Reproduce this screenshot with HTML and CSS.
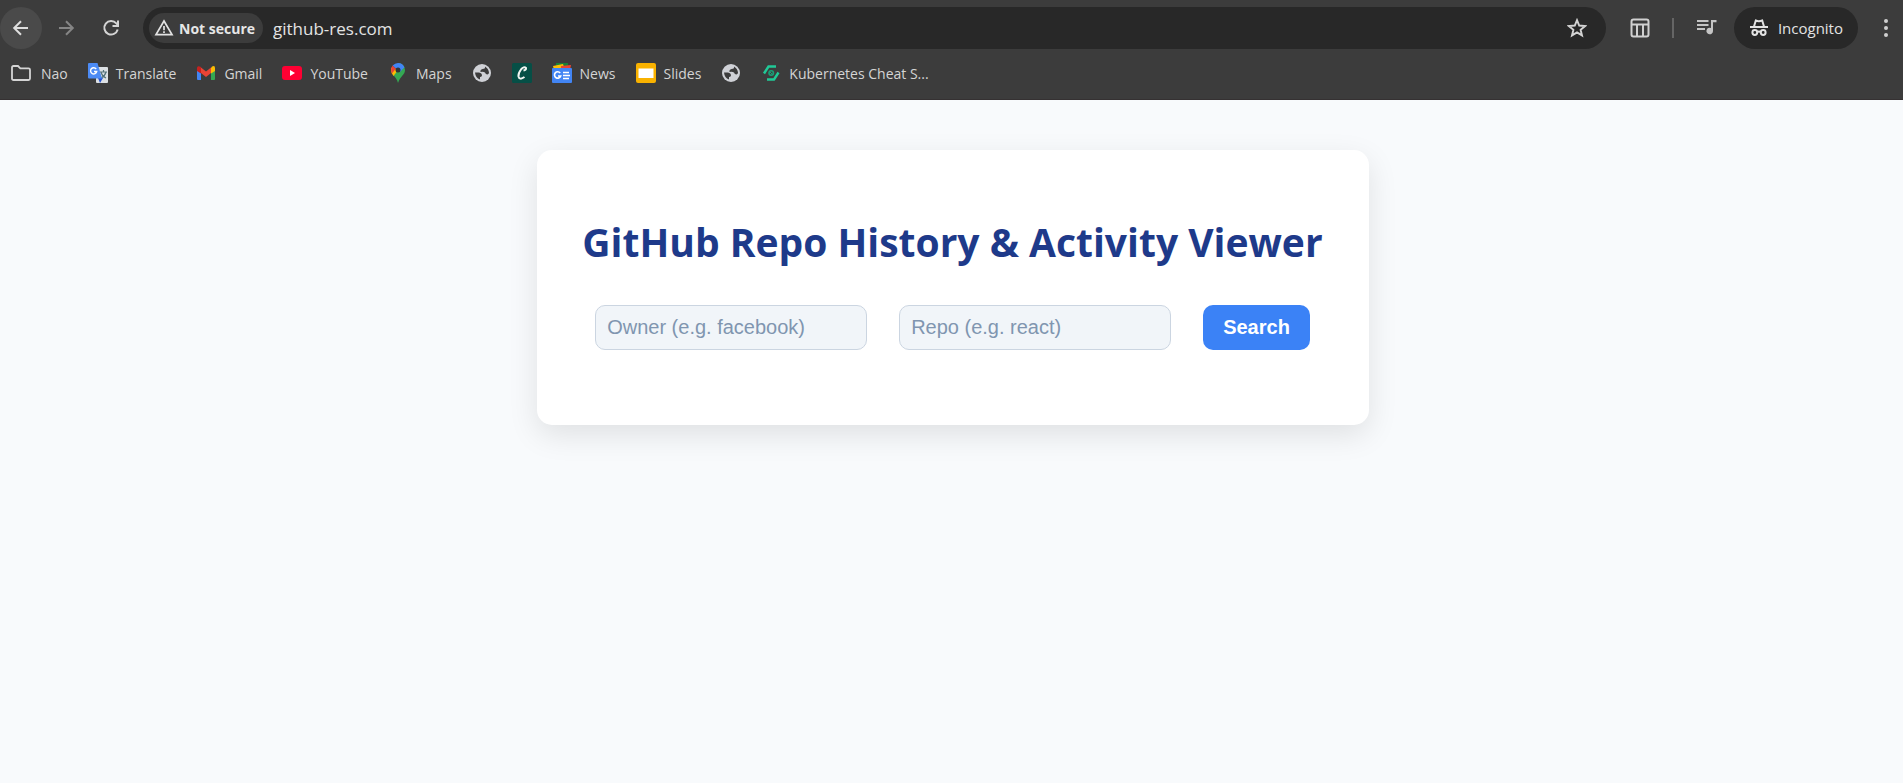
FILE: index.html
```html
<!DOCTYPE html>
<html lang="en">
<head>
<meta charset="utf-8">
<title>GitHub Repo History &amp; Activity Viewer</title>
<link rel="stylesheet" href="styles.css">
</head>
<body>
<header class="browser">
  <nav class="toolbar" aria-label="Browser toolbar">
    <button class="tool tool-active" aria-label="Back"><svg width="20" height="20" viewBox="0 0 20 20" fill="none" stroke="#dedede" stroke-width="2"><path d="M17 10H4M10 3.200L3.200 10l6.800 6.800"/></svg></button>
    <button class="tool" aria-label="Forward"><svg width="20" height="20" viewBox="0 0 20 20" fill="none" stroke="#858585" stroke-width="2"><path d="M3 10h13M10 3.200l6.800 6.800-6.800 6.800"/></svg></button>
    <button class="tool" aria-label="Reload"><svg width="20" height="20" viewBox="0 0 20 20" fill="none" stroke="#d4d4d4" stroke-width="2"><path d="M16.700 11.500A6.800 6.800 0 1 1 15.300 5.300L17 7.200M17 2.500v5.500h-5.500"/></svg></button>
    <div class="omnibox">
      <button class="chip"><svg width="20" height="20" viewBox="0 0 20 20" fill="none" stroke="#e3e3e3" stroke-width="1.700"><path d="M10 3L18 16.600H2zM10 8v4.300M10 13.300v1.700"/></svg>Not secure</button>
      <input class="url" type="text" value="github-res.com" aria-label="Address">
      <button class="star" aria-label="Bookmark this page"><svg width="20" height="20" viewBox="0 0 20 20" fill="none" stroke="#d4d4d4" stroke-width="1.900"><path d="M10 2.200l2.200 5.300 5.900.5-4.500 3.800 1.400 5.600L10 14.400l-5 3 1.400-5.600L1.900 8l5.900-.5z"/></svg></button>
    </div>
    <div class="actions">
      <button class="action" aria-label="Layout"><svg width="20" height="20" viewBox="0 0 20 20" fill="none" stroke="#d0d0d0" stroke-width="2"><rect x="1.500" y="1.500" width="17" height="17" rx="2"/><path d="M2 6.500h16M7 6.500V18M13 6.500V18"/></svg></button>
      <span class="divider"></span>
      <button class="action" aria-label="Media controls"><svg width="20" height="20" viewBox="0 0 20 20" fill="#c4c4c4"><path d="M0 2h11.500v2H0zM0 6h11.500v2H0zM0 10h8v2H0zM14 2h5.500v2.200H16V13a3.300 3.300 0 1 1-2-3z"/></svg></button>
    </div>
    <button class="incognito"><svg width="20" height="20" viewBox="0 0 20 20" fill="none" stroke="#e3e3e3" stroke-width="2"><path d="M1 9h18M5 8.500L6.800 2.500q2 .8 3.200.7T13.200 2.500L15 8.500"/><circle cx="5.800" cy="14.500" r="2.400"/><circle cx="14.200" cy="14.500" r="2.400"/><path d="M8 14q2-1 4 0"/></svg>Incognito</button>
    <button class="menu" aria-label="Menu"><svg width="6" height="20" viewBox="0 0 6 20" fill="#d0d0d0"><circle cx="3" cy="3" r="2"/><circle cx="3" cy="10" r="2"/><circle cx="3" cy="17" r="2"/></svg></button>
  </nav>
  <nav class="bookmarks" aria-label="Bookmarks">
    <a class="folder" href="#"><svg width="20" height="20" viewBox="0 0 20 20" fill="none" stroke="#d4d4d4" stroke-width="1.800"><path d="M1 4.500q0-1.500 1.500-1.500H7l2.300 2.300h8.200q1.500 0 1.500 1.500v8.700q0 1.500-1.500 1.500h-15Q1 17 1 15.500z"/></svg>Nao</a>
    <a href="#"><svg width="20" height="20" viewBox="0 0 20 20"><rect x="8" y="4" width="12" height="16" rx="1" fill="#dce0e4"/><path d="M12 9h7M15.500 7v2M13 9q1 4 5 6M18 9q-1 4-5 6" fill="none" stroke="#55737b" stroke-width="1.200"/><path d="M10 15h5l-3 5z" fill="#2452cf"/><path d="M1 0h8.500L14 15.500H1q-1 0-1-1V1q0-1 1-1z" fill="#4c8bf5"/><path d="M8.200 6A3.100 3.100 0 1 0 8.700 8.500H6" fill="none" stroke="#fff" stroke-width="1.400"/></svg>Translate</a>
    <a href="#"><svg width="20" height="20" viewBox="0 0 20 20"><path d="M1 7l4 3v7H2q-1 0-1-1z" fill="#4285f4"/><path d="M19 7l-4 3v7h3q1 0 1-1z" fill="#34a853"/><path d="M15 5v5.500L19 8V5q0-3-3-1.500z" fill="#fbbc04"/><path d="M1 5v3l4 2.500V4Q1 2 1 5z" fill="#c5221f"/><path d="M5 4.500l5 4 5-4V10l-5 4-5-4z" fill="#ea4335"/></svg>Gmail</a>
    <a href="#"><svg width="20" height="20" viewBox="0 0 20 20"><rect y="3" width="20" height="14" rx="3" fill="#ff0033"/><path d="M8 7l5 3-5 3z" fill="#fff"/></svg>YouTube</a>
    <a href="#"><svg width="20" height="20" viewBox="0 0 20 20"><path d="M10 0a7 7 0 0 1 7 7c0 5-5 6-7 13-1-4-3-6-5-8l8-10z" fill="#34a853"/><path d="M3.500 4.500L10 7l-4.500 6Q3 10 3 7q0-1.500.5-2.500z" fill="#fbbc04"/><path d="M4.600 2.500L8 5.500 4 10.500Q2 6 4.600 2.500z" fill="#ea4335"/><path d="M4.600 2.500Q7 0 10 0q4.500 0 6.500 4.300L12 9 8 5.500z" fill="#4285f4"/><circle cx="10" cy="7" r="2.500" fill="#303437"/></svg>Maps</a>
    <a href="#" aria-label="Website"><svg width="20" height="20" viewBox="0 0 20 20"><circle cx="10" cy="10" r="9" fill="#cfd1d6"/><path d="M13 3.500Q13.500 6 10.500 6 8 6.500 8.500 9q3-.5 4.500.5.500 2 2.500 2 1.500-.5 1.500-2-.5-4-4-6zM3 9.500h4q3 .5 3 3-.5 1.500-2 1.500v2.500Q3.500 15 3 9.500z" fill="#3c3c3c"/></svg></a>
    <a href="#" aria-label="C"><svg width="20" height="20" viewBox="0 0 20 20"><rect width="20" height="20" rx="1.500" fill="#064f46"/><path d="M11.500 7.500q3-.5 2.500-2.500-2-2-5 1.500-3 4-2.500 7 1 4 6 .5" fill="none" stroke="#f1f5f2" stroke-width="2"/></svg></a>
    <a href="#"><svg width="20" height="20" viewBox="0 0 20 20"><path d="M4 0h12v6H4z" fill="#188038"/><path d="M1 3l10-2 2 6H2z" fill="#fbbc04"/><path d="M9 3l10-1-1 5H9z" fill="#ea4335"/><rect y="5" width="20" height="15" rx="1" fill="#4285f4"/><path d="M8.200 10A3.200 3.200 0 1 0 8.700 13H6M11 9.500h6M11 12.500h7M11 15.500h6" fill="none" stroke="#fff" stroke-width="1.600"/></svg>News</a>
    <a href="#"><svg width="20" height="20" viewBox="0 0 20 20"><rect width="20" height="20" rx="2" fill="#f9b200"/><rect x="2.500" y="5.500" width="15" height="9.500" fill="#fff"/></svg>Slides</a>
    <a href="#" aria-label="Website"><svg width="20" height="20" viewBox="0 0 20 20"><circle cx="10" cy="10" r="9" fill="#cfd1d6"/><path d="M13 3.500Q13.500 6 10.500 6 8 6.500 8.500 9q3-.5 4.500.5.500 2 2.500 2 1.500-.5 1.500-2-.5-4-4-6zM3 9.500h4q3 .5 3 3-.5 1.500-2 1.500v2.500Q3.500 15 3 9.500z" fill="#3c3c3c"/></svg></a>
    <a href="#"><svg width="20" height="20" viewBox="0 0 20 20" fill="none" stroke="#20c997" stroke-width="2.400"><path d="M15 3.500H7.500L3 10.500M6 16.500h7l4.500-7"/><circle cx="10.200" cy="10" r="2.200" stroke="#18a078" stroke-width="1.600"/><path d="M9 9l2.500 2.500" stroke="#18a078" stroke-width="1"/></svg>Kubernetes Cheat S...</a>
  </nav>
</header>
<main class="page">
  <section class="card">
    <h1>GitHub Repo History &amp; Activity Viewer</h1>
    <form class="search">
      <input type="text" placeholder="Owner (e.g. facebook)" aria-label="Owner">
      <input type="text" placeholder="Repo (e.g. react)" aria-label="Repo">
      <button type="button">Search</button>
    </form>
  </section>
</main>
</body>
</html>
```
FILE: styles.css
```css
* { box-sizing: border-box; }
body {
  margin: 0;
  min-height: 100vh;
  background: #f8fafc;
  font-family: "Open Sans", "Noto Sans", sans-serif;
}
svg { display: block; flex: none; }
button {
  border: 0;
  padding: 0;
  background: none;
  font-family: inherit;
  cursor: pointer;
}
.browser {
  padding-top: 7px;
  background: #3c3c3c;
  border-bottom: 1px solid #353132;
  color: #d8d8d8;
}
.toolbar {
  display: flex;
  align-items: center;
  height: 42px;
  padding-right: 14px;
}
.tool {
  display: grid;
  place-items: center;
  width: 42px;
  height: 42px;
  margin-right: 3px;
  border-radius: 50%;
}
.tool-active { background: #4a4a4a; }
.omnibox {
  display: flex;
  flex: 1;
  align-items: center;
  height: 42px;
  margin-left: 8px;
  padding: 0 19px 0 6px;
  border-radius: 21px;
  background: #282828;
}
.chip {
  display: flex;
  align-items: center;
  gap: 5px;
  height: 30px;
  padding: 0 8px 0 5px;
  border-radius: 15px;
  background: #3c3c3c;
  color: #e6e6e6;
  font-size: 14px;
  font-weight: 700;
}
.url {
  flex: 1;
  min-width: 0;
  height: 30px;
  margin-left: 8px;
  border: 0;
  padding: 0 2px;
  background: none;
  color: #e3e3e3;
  font-family: inherit;
  font-size: 17px;
}
.actions {
  display: flex;
  align-items: center;
  margin: 0 17px 0 24px;
}
.divider {
  width: 2px;
  height: 20px;
  margin: 0 23px 0 22px;
  background: #656565;
}
.incognito {
  display: flex;
  align-items: center;
  gap: 9px;
  height: 42px;
  padding: 0 15px;
  border-radius: 21px;
  background: #282828;
  color: #e3e3e3;
  font-size: 15px;
}
.menu { margin-left: 25px; }
.bookmarks {
  display: flex;
  align-items: center;
  gap: 20px;
  height: 50px;
  padding: 0 0 2px 11px;
}
.bookmarks a {
  display: flex;
  align-items: center;
  gap: 8px;
  color: #d4d4d4;
  font-size: 14px;
  text-decoration: none;
  white-space: nowrap;
}
.bookmarks .folder { gap: 10px; }
.page {
  display: flex;
  justify-content: center;
  padding: 50px 14px 50px 16px;
}
.card {
  width: 832px;
  max-width: 100%;
  padding: 64px 40px 75px;
  border-radius: 15px;
  background: #fff;
  box-shadow: 0 10px 30px rgba(0, 0, 0, 0.1);
}
h1 {
  margin: 0 0 36px;
  color: #1e3a8a;
  font-size: 39px;
  line-height: 55px;
  text-align: center;
}
.search {
  display: flex;
  flex-wrap: wrap;
  justify-content: center;
  gap: 32px;
}
.search input,
.search button {
  height: 45px;
  border-radius: 10px;
  font-family: "Liberation Sans", Arial, sans-serif;
  font-size: 20px;
}
.search input {
  width: 272px;
  padding: 0 11px;
  border: 1px solid #cbd5e1;
  background: #f1f5f9;
  color: #1e293b;
}
.search input::placeholder { color: #8095b0; }
.search button {
  padding: 0 20px;
  background: #3b82f6;
  color: #fff;
  font-weight: 700;
}
```
